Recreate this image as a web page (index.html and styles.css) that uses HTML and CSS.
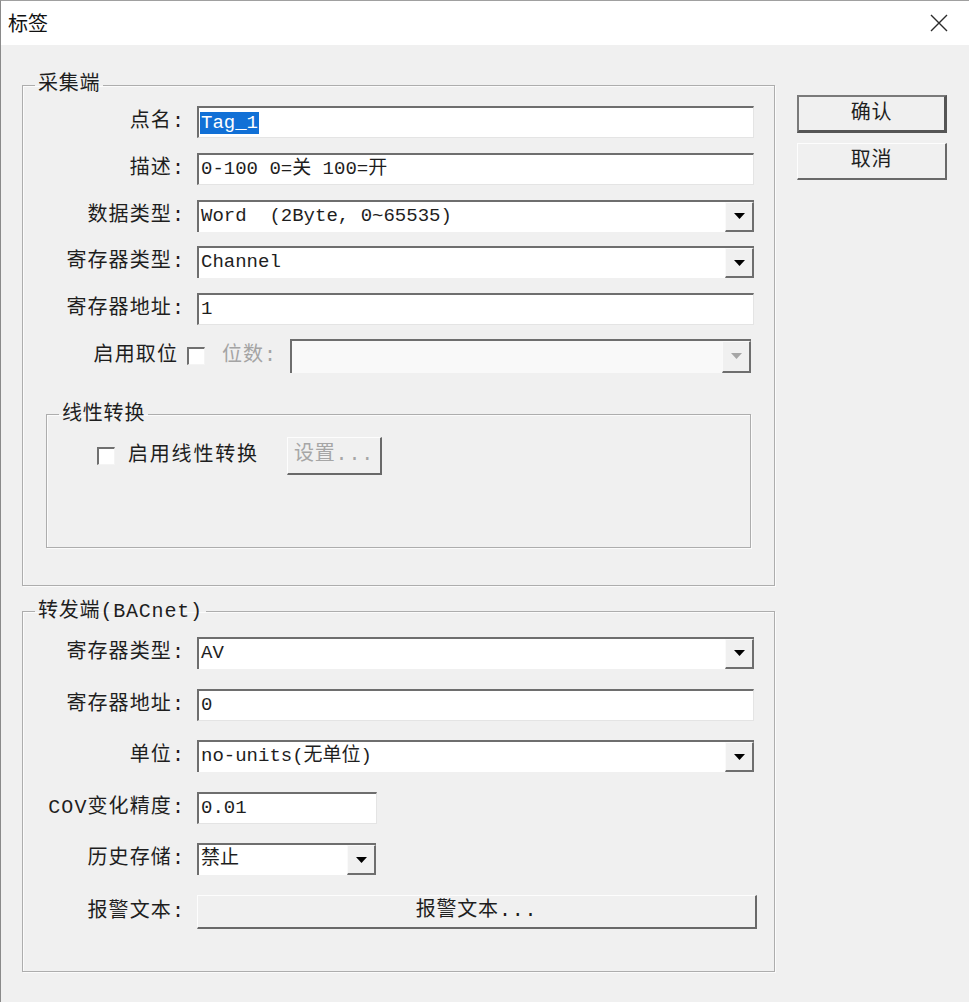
FILE: index.html
```html
<!DOCTYPE html>
<html lang="zh-CN">
<head>
<meta charset="utf-8">
<title>标签</title>
<link rel="stylesheet" href="styles.css">
</head>
<body>
<div class="window">
  <div class="titlebar">
    <span class="title">标签</span>
    <span class="close"><svg width="18" height="18" viewBox="0 0 18 18"><path d="M1 1 L17 17 M17 1 L1 17" stroke="#2b2b2b" stroke-width="1.4" fill="none"/></svg></span>
  </div>
  <div class="body">
    <div class="main">
      <fieldset class="group g1">
        <legend>采集端</legend>
        <div class="form f1">
          <div class="row"><span class="lbl">点名:</span><div class="edit"><span class="sel">Tag_1</span></div></div>
          <div class="row"><span class="lbl">描述:</span><div class="edit"><span class="val">0-100 0=关 100=开</span></div></div>
          <div class="row"><span class="lbl">数据类型:</span><div class="combo"><span class="val">Word  (2Byte, 0~65535)</span><span class="drop"><svg width="11" height="6" viewBox="0 0 11 6"><path d="M0 0 H11 L5.5 6 Z" fill="#000"/></svg></span></div></div>
          <div class="row"><span class="lbl">寄存器类型:</span><div class="combo"><span class="val">Channel</span><span class="drop"><svg width="11" height="6" viewBox="0 0 11 6"><path d="M0 0 H11 L5.5 6 Z" fill="#000"/></svg></span></div></div>
          <div class="row"><span class="lbl">寄存器地址:</span><div class="edit"><span class="val">1</span></div></div>
          <div class="row"><span class="lbl short">启用取位</span><span class="check"></span><span class="dim">位数:</span><div class="combo disabled bitcombo"><span class="val"></span><span class="drop"><svg width="11" height="6" viewBox="0 0 11 6"><path d="M0 0 H11 L5.5 6 Z" fill="#a6a6a6"/></svg></span></div></div>
        </div>
        <fieldset class="group inner">
          <legend>线性转换</legend>
          <div class="linrow">
            <span class="check"></span>
            <span class="lintext">启用线性转换</span>
            <button class="btn set" disabled>设置...</button>
          </div>
        </fieldset>
      </fieldset>
      <fieldset class="group g2">
        <legend>转发端(BACnet)</legend>
        <div class="form f2">
          <div class="row"><span class="lbl">寄存器类型:</span><div class="combo"><span class="val">AV</span><span class="drop"><svg width="11" height="6" viewBox="0 0 11 6"><path d="M0 0 H11 L5.5 6 Z" fill="#000"/></svg></span></div></div>
          <div class="row"><span class="lbl">寄存器地址:</span><div class="edit"><span class="val">0</span></div></div>
          <div class="row"><span class="lbl">单位:</span><div class="combo"><span class="val">no-units(无单位)</span><span class="drop"><svg width="11" height="6" viewBox="0 0 11 6"><path d="M0 0 H11 L5.5 6 Z" fill="#000"/></svg></span></div></div>
          <div class="row"><span class="lbl">COV变化精度:</span><div class="edit small"><span class="val">0.01</span></div></div>
          <div class="row"><span class="lbl">历史存储:</span><div class="combo small"><span class="val">禁止</span><span class="drop"><svg width="11" height="6" viewBox="0 0 11 6"><path d="M0 0 H11 L5.5 6 Z" fill="#000"/></svg></span></div></div>
          <div class="row tall"><span class="lbl">报警文本:</span><button class="btn alarm">报警文本...</button></div>
        </div>
      </fieldset>
    </div>
    <div class="side">
      <button class="btn default">确认</button>
      <button class="btn cancel">取消</button>
    </div>
  </div>
</div>
</body>
</html>
```

FILE: styles.css
```css
* { box-sizing: border-box; }

body {
  margin: 0;
  background: #f0f0f0;
  font-family: "Liberation Mono", "Noto Sans CJK SC", monospace;
  font-size: 20px;
  color: #1e1e1e;
}

.window {
  width: 969px;
  height: 1002px;
  border-left: 1px solid #8a8a8a;
  border-top: 1px solid #a0a0a0;
  background: #f0f0f0;
  overflow: hidden;
}

.titlebar {
  height: 44px;
  background: #fff;
  display: flex;
  align-items: center;
  justify-content: space-between;
  padding: 0 21px 0 7px;
}

.title {
  font-family: "Noto Sans CJK SC", sans-serif;
  font-size: 20px;
  line-height: 24px;
  color: #111;
}

.close { display: flex; }

.body {
  display: flex;
  align-items: flex-start;
  gap: 22px;
  padding: 27px 0 0 21px;
}

.main {
  width: 753px;
  display: flex;
  flex-direction: column;
}

fieldset.group {
  margin: 0;
  padding: 0;
  min-width: 0;
  border: 1px solid #adadad;
  box-shadow: inset 1px 1px 0 #fbfbfb, 1px 1px 0 #fbfbfb;
}

legend {
  margin-left: 12px;
  padding: 0 3px;
  height: 26px;
  line-height: 26px;
  letter-spacing: 0.8px;
  white-space: nowrap;
}

.form {
  display: flex;
  flex-direction: column;
}

.f1 {
  padding: 8px 20px 0 0;
  gap: 14.8px;
}

.f2 {
  padding: 12px 20px 42px 0;
  gap: 19.6px;
}

.row {
  display: flex;
  align-items: center;
  height: 32px;
}

.row.tall { height: 34px; }

.lbl {
  width: 162px;
  flex: none;
  margin-right: 12px;
  text-align: right;
  line-height: 26px;
  letter-spacing: 1.1px;
  white-space: nowrap;
}

.lbl.short {
  width: 155px;
  margin-right: 9px;
}

.edit, .combo {
  flex: 1;
  height: 32px;
  display: flex;
  align-items: stretch;
  background: #fff;
  border-style: solid;
  border-width: 2px 1px 1px 2px;
  border-color: #6e6e6e #e4e4e4 #e4e4e4 #6e6e6e;
  font-size: 19px;
}

.combo {
  border-right-width: 0;
  border-bottom-width: 0;
}

.edit.small { flex: none; width: 180px; }
.combo.small { flex: none; width: 179px; }

.val {
  flex: 1;
  padding-left: 2px;
  line-height: 29px;
  white-space: pre;
  overflow: hidden;
}

.sel {
  align-self: center;
  margin-left: 1px;
  height: 22px;
  line-height: 22px;
  background: #1170d6;
  color: #fff;
  padding: 0 1px;
}

.drop {
  width: 29px;
  flex: none;
  display: flex;
  align-items: center;
  justify-content: center;
  background: #f0f0f0;
  border-style: solid;
  border-width: 1px 2px 2px 1px;
  border-color: #fafafa #6e6e6e #6e6e6e #fafafa;
}

.combo.disabled {
  background: #f9f9f9;
}

.bitcombo {
  margin-right: 3px;
  height: 34px;
}

.check {
  width: 18px;
  height: 18px;
  flex: none;
  background: #fff;
  border-style: solid;
  border-width: 2px 1px 1px 2px;
  border-color: #707070 #f4f4f4 #f4f4f4 #707070;
}

.dim {
  width: 68px;
  margin-left: 17px;
  color: #a4a4a4;
  line-height: 26px;
  letter-spacing: 1px;
  white-space: nowrap;
}

fieldset.inner {
  margin: 30px 23px 37px 23px;
}

.linrow {
  display: flex;
  align-items: center;
  padding: 9px 0 72px 50px;
}

.lintext {
  margin-left: 13px;
  width: 134px;
  line-height: 26px;
  letter-spacing: 1.8px;
  white-space: nowrap;
}

fieldset.g2 { margin-top: 13px; }

.btn {
  font-family: "Liberation Mono", "Noto Sans CJK SC", monospace;
  font-size: 20px;
  color: #1e1e1e;
  background: #f0f0f0;
  border-style: solid;
  border-width: 1px 2px 2px 1px;
  border-color: #fdfdfd #696969 #696969 #fdfdfd;
  padding: 0;
  line-height: 26px;
  letter-spacing: 0.8px;
}

.btn.set {
  width: 95px;
  height: 38px;
  margin-left: 25px;
  color: #a6a6a6;
}

.btn.alarm {
  width: 560px;
  height: 34px;
  flex: none;
}

.side {
  width: 150px;
  display: flex;
  flex-direction: column;
  gap: 10px;
  padding-top: 23px;
}

.btn.default {
  height: 38px;
  border-width: 2px 3px 3px 2px;
  border-color: #7a7a7a #555 #555 #7a7a7a;
}

.btn.cancel {
  height: 37px;
}
```
